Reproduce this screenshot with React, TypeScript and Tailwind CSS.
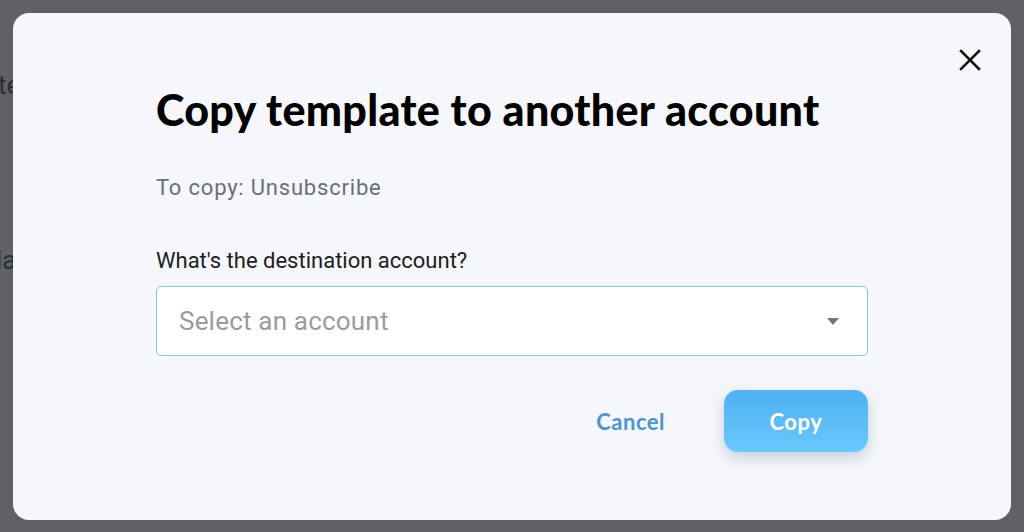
import React from 'react';

const CloseIcon = () => (
  <svg width="22" height="22" viewBox="0 0 22 22" fill="none" stroke="#111" strokeWidth="2.5" strokeLinecap="square">
    <path d="M2 2L20 20M20 2L2 20" />
  </svg>
);

const App: React.FC = () => {
  return (
    <div className="relative w-[1024px] h-[532px] overflow-hidden bg-[#5f6165]">
      {/* Page behind the dialog */}
      <div className="flex flex-col gap-[136px] pt-[66px] text-[26px] text-[#2b2c2f] font-['Roboto',sans-serif]">
        <div className="-ml-[2px]">te</div>
        <div className="-ml-[4px]">la</div>
      </div>

      {/* Dialog */}
      <div className="absolute inset-0 p-[13px] pb-[12px]">
        <div className="relative h-full rounded-[16px] bg-[#f5f7fa] px-[143px] pt-[71px]">
          <button className="absolute right-[30px] top-[36px]">
            <CloseIcon />
          </button>

          <h2 className="font-['Lato',sans-serif] font-black text-[43px] leading-[52px] text-black tracking-[0.3px]">
            Copy template to another account
          </h2>

          <p className="mt-[38px] font-['Roboto',sans-serif] text-[22px] leading-[28px] text-[#6b6f76] tracking-[0.8px]">
            To copy: Unsubscribe
          </p>

          <label className="block mt-[45px] font-['Roboto',sans-serif] text-[22px] leading-[28px] text-[#1c1d1f]">
            What's the destination account?
          </label>

          <div className="mt-[11px] h-[70px] rounded-[5px] border border-[#85c3e6] bg-white flex items-center justify-between pl-[22px] pr-[28px]">
            <span className="font-['Roboto',sans-serif] text-[26px] text-[#9b9b9b] tracking-[0.2px]">Select an account</span>
            <svg width="12" height="7" viewBox="0 0 12 7">
              <path d="M0 0H12L6 7Z" fill="#757575" />
            </svg>
          </div>

          <div className="mt-[34px] flex items-center justify-end gap-[59px]">
            <button className="font-['Lato',sans-serif] font-bold text-[22px] text-[#4a94d8] tracking-[0.5px]">
              Cancel
            </button>
            <button className="w-[144px] h-[62px] rounded-[14px] bg-gradient-to-b from-[#4fb0f3] to-[#68c8fb] shadow-[0_6px_14px_rgba(60,90,130,0.25)] font-['Lato',sans-serif] font-bold text-[22px] text-white tracking-[0.6px]">
              Copy
            </button>
          </div>
        </div>
      </div>
    </div>
  );
};

export default App;
